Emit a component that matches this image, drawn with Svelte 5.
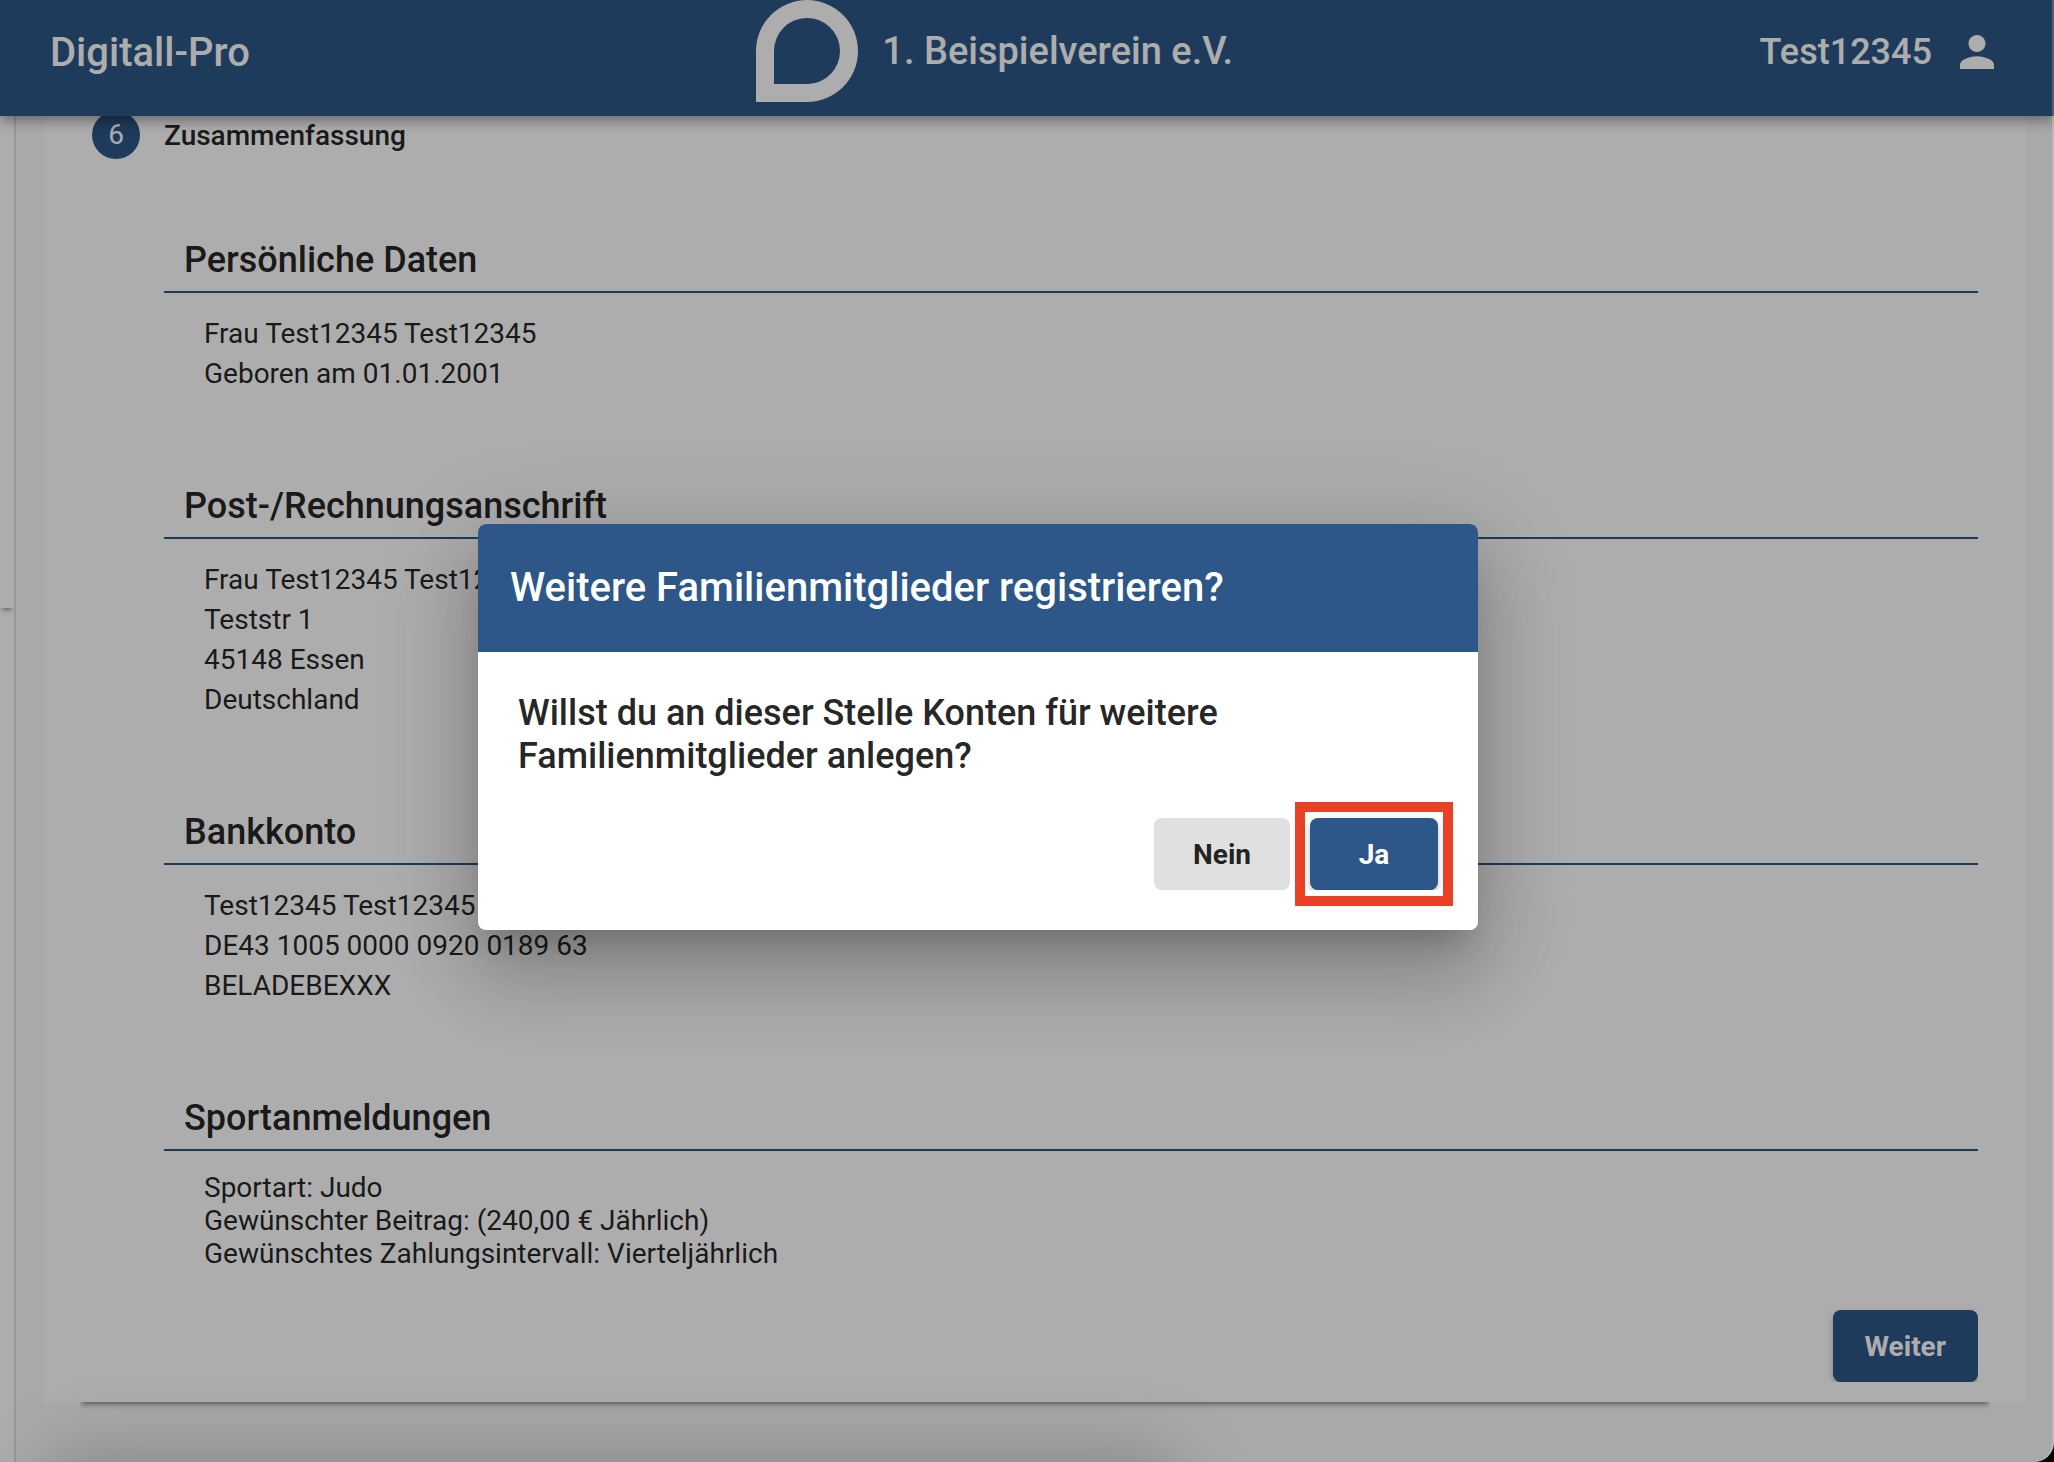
<script>
    const user = "Test12345";

    const sections = [
        {
            title: "Persönliche Daten",
            lines: ["Frau Test12345 Test12345", "Geboren am 01.01.2001"]
        },
        {
            title: "Post-/Rechnungsanschrift",
            lines: ["Frau Test12345 Test12345", "Teststr 1", "45148 Essen", "Deutschland"]
        },
        {
            title: "Bankkonto",
            lines: ["Test12345 Test12345", "DE43 1005 0000 0920 0189 63", "BELADEBEXXX"]
        },
        {
            title: "Sportanmeldungen",
            compact: true,
            lines: [
                "Sportart: Judo",
                "Gewünschter Beitrag: (240,00 € Jährlich)",
                "Gewünschtes Zahlungsintervall: Vierteljährlich"
            ]
        }
    ];
</script>

<div class="window">
    <header class="toolbar">
        <span class="brand">Digitall-Pro</span>
        <div class="club">
            <svg class="logo" viewBox="0 0 102 102" aria-hidden="true">
                <path fill-rule="evenodd" d="M0 102V51a51 51 0 1 1 51 51ZM18 84h34a33 33 0 1 0-34-33Z" />
            </svg>
            <span>1. Beispielverein e.V.</span>
        </div>
        <div class="user">
            <span>{user}</span>
            <svg class="person" viewBox="4 4 16 16" aria-hidden="true">
                <path d="M12 12c2.21 0 4-1.79 4-4s-1.79-4-4-4-4 1.79-4 4 1.79 4 4 4zm0 2c-2.67 0-8 1.34-8 4v2h16v-2c0-2.66-5.33-4-8-4z" />
            </svg>
        </div>
    </header>

    <div class="body">
        <aside class="sidenav">
            <div class="navCard"></div>
        </aside>
        <main class="content">
            <div class="card">
                <div class="stepper">
                    <div class="step">
                        <span class="stepIcon">6</span>
                        <span class="stepLabel">Zusammenfassung</span>
                    </div>
                    <div class="summary">
                        {#each sections as section}
                            <section>
                                <h2>{section.title}</h2>
                                <div class="lines" class:compact={section.compact}>
                                    {#each section.lines as line}
                                        <p>{line}</p>
                                    {/each}
                                </div>
                            </section>
                        {/each}
                        <div class="stepActions">
                            <button type="button" class="btn primary">Weiter</button>
                        </div>
                    </div>
                </div>
            </div>
        </main>
    </div>

    <div class="backdrop"></div>
    <div class="bottomShadow"></div>

    <div class="overlay">
        <div class="dialog" role="dialog" aria-modal="true" aria-labelledby="dialog-title">
            <h1 id="dialog-title">Weitere Familienmitglieder registrieren?</h1>
            <div class="dialogBody">
                <p>Willst du an dieser Stelle Konten für weitere Familienmitglieder anlegen?</p>
                <div class="dialogActions">
                    <button type="button" class="btn no">Nein</button>
                    <div class="marker">
                        <button type="button" class="btn primary yes">Ja</button>
                    </div>
                </div>
            </div>
        </div>
    </div>
</div>

<style>
    :global(body) {
        background: #000;
    }
    .window {
        position: relative;
        min-height: 100vh;
        display: flex;
        flex-direction: column;
        overflow: hidden;
        border-bottom-right-radius: 20px;
        background: #fafafa;
        font-family: Roboto, "Liberation Sans", sans-serif;
        color: rgba(0, 0, 0, 0.87);
    }
    /* light edge on the right side of the window */
    .window::after {
        position: absolute;
        content: "";
        inset: 0;
        z-index: 4;
        border-right: 2px solid rgba(255, 255, 255, 0.2);
        border-bottom-right-radius: 20px;
        pointer-events: none;
    }
    h1, h2, p {
        margin: 0;
    }
    .toolbar {
        position: relative;
        z-index: 1;
        display: flex;
        justify-content: space-between;
        height: 116px;
        box-sizing: border-box;
        padding: 0 60px 12px 50px;
        align-items: center;
        background: #2d5788;
        color: #fff;
        font-size: 38px;
        font-weight: 500;
        box-shadow: 0 4px 8px -2px rgba(0, 0, 0, 0.2), 0 8px 10px rgba(0, 0, 0, 0.14), 0 2px 20px rgba(0, 0, 0, 0.12);
    }
    .brand {
        font-size: 40px;
    }
    .club, .user {
        display: flex;
        align-items: center;
        gap: 24px;
    }
    .club {
        align-self: flex-start;
    }
    .user {
        gap: 28px;
        padding-left: 20px;
        font-size: 36px;
    }
    .logo {
        width: 102px;
        height: 102px;
        fill: #fff;
    }
    .person {
        width: 34px;
        height: 34px;
        fill: #fff;
    }
    .body {
        flex: 1;
        display: flex;
    }
    .sidenav {
        width: 14px;
        border-right: 2px solid rgba(0, 0, 0, 0.12);
        background: #fff;
    }
    .navCard {
        height: 492px;
        background: #fff;
        box-shadow: 0 6px 2px -4px rgba(0, 0, 0, 0.2), 0 4px 4px rgba(0, 0, 0, 0.14);
        clip-path: inset(0 0 -20px 0);
    }
    .content {
        flex: 1;
        padding: 0 28px 60px;
    }
    .card {
        padding: 0 36px;
        background: #fff;
    }
    .stepper {
        padding: 0 12px 20px;
        box-shadow: 0 6px 2px -4px rgba(0, 0, 0, 0.2), 0 4px 4px rgba(0, 0, 0, 0.14), 0 2px 10px rgba(0, 0, 0, 0.12);
        clip-path: inset(0 0 -20px 0);
    }
    .step {
        display: flex;
        align-items: center;
        gap: 24px;
        height: 48px;
        margin-top: -5px;
    }
    .stepIcon {
        width: 48px;
        height: 48px;
        border-radius: 50%;
        background: #2d5788;
        color: #fff;
        font-size: 28px;
        line-height: 48px;
        text-align: center;
    }
    .stepLabel {
        font-size: 28px;
        font-weight: 500;
    }
    .summary {
        padding: 72px 0 0 72px;
    }
    section + section {
        margin-top: 83px;
    }
    h2 {
        padding: 0 20px 2px;
        border-bottom: 2px solid #2d5788;
        font-size: 36px;
        font-weight: 500;
        line-height: 58px;
    }
    .lines {
        padding: 21px 40px 0;
        font-size: 28px;
        line-height: 40px;
    }
    .compact {
        padding-top: 20px;
        line-height: 33px;
    }
    .stepActions {
        display: flex;
        justify-content: flex-end;
        overflow: hidden;
        margin-top: 30px;
        padding: 10px 0 0 10px;
    }
    .btn {
        height: 72px;
        padding: 0 32px;
        border: 0;
        border-radius: 8px;
        background: #e0e0e0;
        color: rgba(0, 0, 0, 0.87);
        font: 700 28px Roboto, "Liberation Sans", sans-serif;
    }
    .primary {
        background: #2d5788;
        color: #fff;
        box-shadow: 0 6px 2px -4px rgba(0, 0, 0, 0.2), 0 4px 4px rgba(0, 0, 0, 0.14), 0 2px 10px rgba(0, 0, 0, 0.12);
    }
    .no {
        min-width: 136px;
    }
    .yes {
        display: block;
        min-width: 128px;
        clip-path: inset(-10px -10px 0 -10px);
    }
    .backdrop {
        position: absolute;
        inset: 0;
        z-index: 2;
        background: rgba(0, 0, 0, 0.32);
    }
    .bottomShadow {
        position: absolute;
        top: 100%;
        left: 50px;
        right: 43%;
        z-index: 2;
        height: 100px;
        box-shadow: 0 0 80px rgba(0, 0, 0, 0.25);
    }
    .overlay {
        position: absolute;
        inset: 0;
        z-index: 3;
        display: flex;
        align-items: center;
        justify-content: center;
        padding: 0 98px 8px 0;
    }
    .dialog {
        width: 1000px;
        border-radius: 8px;
        overflow: hidden;
        background: #fff;
        box-shadow: 0 22px 30px -14px rgba(0, 0, 0, 0.2), 0 48px 76px 6px rgba(0, 0, 0, 0.14), 0 18px 92px 16px rgba(0, 0, 0, 0.12);
    }
    h1 {
        padding: 0 32px;
        background: #2d5788;
        color: #fff;
        font-size: 40px;
        font-weight: 500;
        line-height: 128px;
    }
    .dialogBody {
        padding: 40px 25px 24px 40px;
        font-size: 36px;
        font-weight: 500;
        line-height: 43px;
    }
    .dialogActions {
        display: flex;
        align-items: center;
        justify-content: flex-end;
        gap: 5px;
        padding-top: 24px;
    }
    .marker {
        padding: 6px 5px;
        border: 10px solid #ea4025;
    }
</style>
